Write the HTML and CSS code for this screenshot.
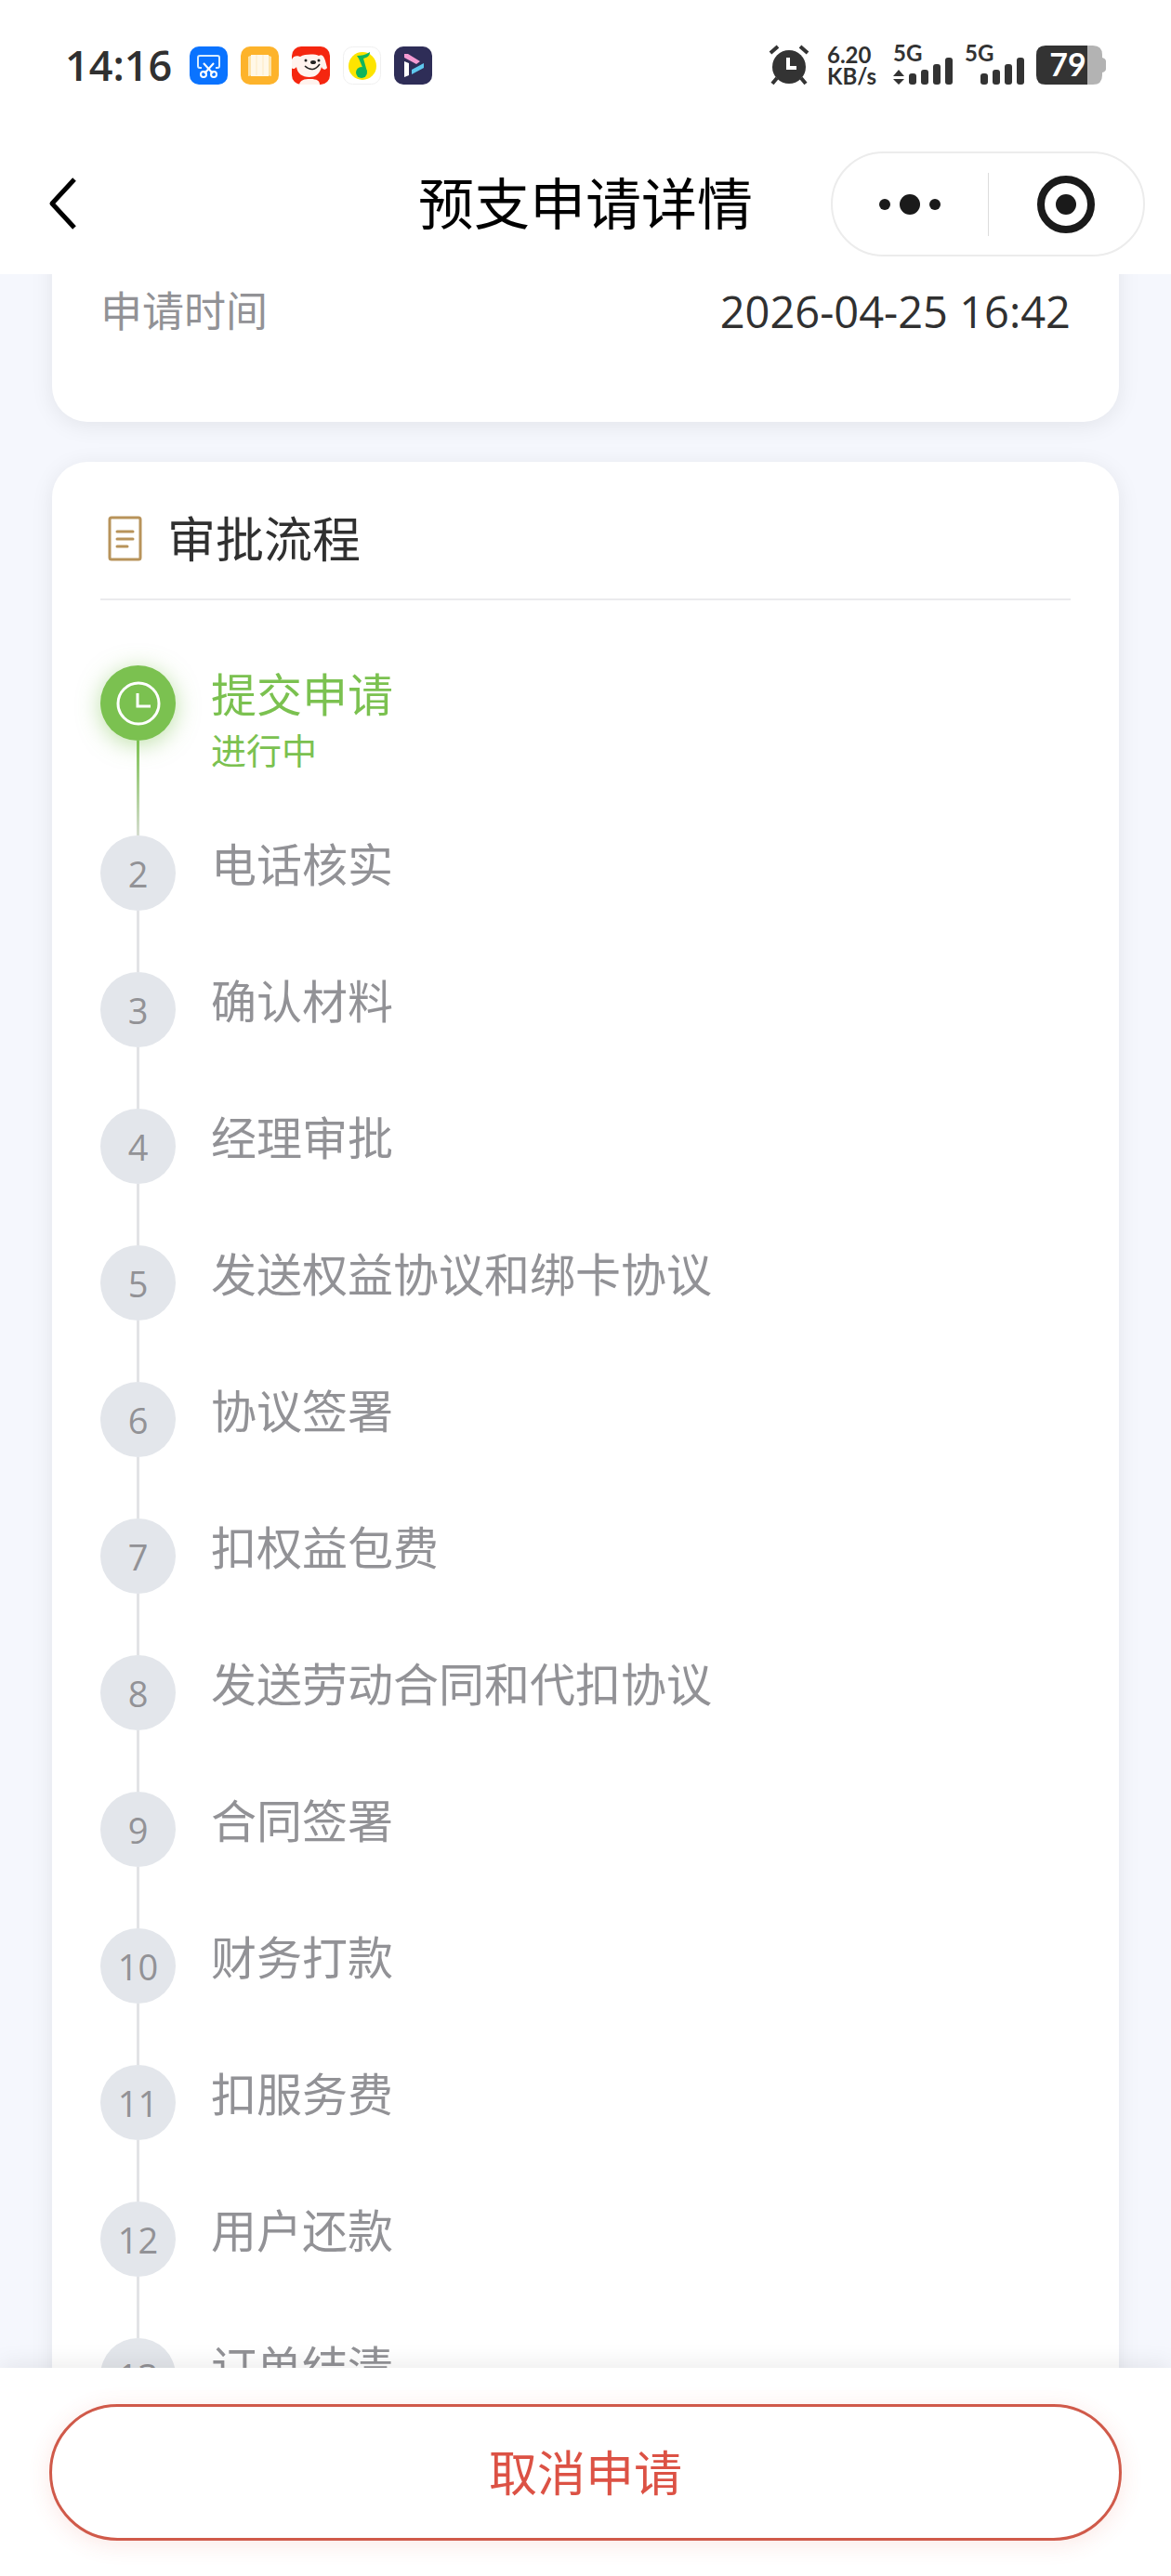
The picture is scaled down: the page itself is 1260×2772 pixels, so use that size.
FILE: index.html
```html
<!DOCTYPE html>
<html lang="zh-CN">
<head>
    <meta charset="UTF-8">
    <meta name="viewport" content="width=device-width, initial-scale=1.0">
    <title>预支申请详情</title>
    <link rel="stylesheet" href="styles.css">
</head>
<body>

    <header class="header">
        <div class="status-bar">
            <div class="status-left">
                <span class="clock">14:16</span>
                <svg class="app-icon" viewBox="0 0 41 41">
                    <rect width="41" height="41" rx="10" fill="#0a73ff"/>
                    <path d="M13 23H11a2 2 0 0 1-2-2V12a2 2 0 0 1 2-2H30a2 2 0 0 1 2 2V21a2 2 0 0 1-2 2H28" fill="none" stroke="#d9ecff" stroke-width="2"/>
                    <path d="M15 18L25 29M26 18L16 29" stroke="#fff" stroke-width="2"/>
                    <circle cx="15" cy="30" r="3" fill="none" stroke="#fff" stroke-width="2"/>
                    <circle cx="26" cy="30" r="3" fill="none" stroke="#fff" stroke-width="2"/>
                </svg>
                <svg class="app-icon" viewBox="0 0 41 41">
                    <rect width="41" height="41" rx="10" fill="#fdb32b"/>
                    <path d="M8 11L13 9V31L8 32ZM33 11L28 9V31L33 32Z" fill="#fde3a8"/>
                    <rect x="11" y="9" width="19" height="23" fill="#fff8e8"/>
                    <path d="M17 9V31M24 9V31" stroke="#fdeac2" stroke-width="1"/>
                </svg>
                <svg class="app-icon" viewBox="0 0 41 41">
                    <rect width="41" height="41" rx="10" fill="#f5260f"/>
                    <path d="M8 41C9 36 13 35 20 35S30 37 30 41Z" fill="#fff3ee"/>
                    <path d="M0 14C2 9 7 10 9 11C14 8 25 8 29 10C34 7 36 14 38 23C36 26 33 25 32 22C30 30 25 33 19 33C11 33 6 29 5 22C3 25 0 24 0 23Z" fill="#fff3ee"/>
                    <ellipse cx="23" cy="17" rx="3" ry="2" fill="#222"/>
                    <circle cx="15" cy="15" r="1.5" fill="#222"/>
                    <circle cx="29" cy="15" r="1.5" fill="#222"/>
                    <path d="M14 21Q23 29 30 19" fill="none" stroke="#222" stroke-width="1.5"/>
                </svg>
                <svg class="app-icon" viewBox="0 0 41 41">
                    <rect x="0.5" y="0.5" width="40" height="40" rx="10" fill="#fff" stroke="#f0f0f0"/>
                    <circle cx="21" cy="21" r="15" fill="#fde400"/>
                    <path d="M15 10C20 10 24 9 29 6C29 10 26 12 22 13L26 27H23L17 13Z" fill="#0fb55c"/>
                    <circle cx="20" cy="28" r="6" fill="#0fb55c"/>
                </svg>
                <svg class="app-icon" viewBox="0 0 41 41">
                    <rect width="41" height="41" rx="10" fill="#2e2d57"/>
                    <path d="M11 16L16 18V31L11 33Z" fill="#fff"/>
                    <path d="M11 8L15 8L28 16L24 19L11 12Z" fill="#f49ad2"/>
                    <path d="M32 18V23L19 30V25Z" fill="#5fc8ee"/>
                </svg>
            </div>
            <div class="status-right">
                <svg class="alarm" viewBox="0 0 42 42">
                    <circle cx="21" cy="23" r="18" fill="#333"/>
                    <path d="M1 8L9 1M41 8L33 1" stroke="#333" stroke-width="4"/>
                    <path d="M8 35L3 41M34 35L39 41" stroke="#333" stroke-width="4"/>
                    <path d="M20 13V24H29" fill="none" stroke="#fff" stroke-width="4"/>
                </svg>
                <div class="speed"><span>6.20</span><span>KB/s</span></div>
                <svg class="signal" viewBox="0 0 65 42">
                    <text x="0" y="17">5G</text>
                    <path d="M0 33L6 26L12 33ZM0 36L6 42L12 36Z"/>
                    <rect x="17" y="30" width="8" height="12" rx="3"/>
                    <rect x="30" y="26" width="8" height="16" rx="3"/>
                    <rect x="43" y="20" width="8" height="22" rx="3"/>
                    <rect x="56" y="13" width="8" height="29" rx="3"/>
                </svg>
                <svg class="signal" viewBox="0 0 65 42">
                    <text x="0" y="17">5G</text>
                    <rect x="17" y="30" width="8" height="12" rx="3"/>
                    <rect x="30" y="26" width="8" height="16" rx="3"/>
                    <rect x="43" y="20" width="8" height="22" rx="3"/>
                    <rect x="56" y="13" width="8" height="29" rx="3"/>
                </svg>
                <svg class="battery" viewBox="0 0 75 42">
                    <path d="M54 0H61Q71 0 71 10V13Q75 14 75 17V25Q75 28 71 29V32Q71 42 61 42H54Z" fill="#b3b3b3"/>
                    <path d="M10 0H55V42H10Q0 42 0 32V10Q0 0 10 0Z" fill="#333"/>
                    <text x="34" y="33" text-anchor="middle">79</text>
                </svg>
            </div>
        </div>

        <nav class="nav-bar">
            <button class="back" type="button" aria-label="返回">
                <svg viewBox="0 0 30 56"><path d="M28 2L4 28L28 54" fill="none" stroke="#000" stroke-width="5" stroke-linejoin="round"/></svg>
            </button>
            <h1>预支申请详情</h1>
            <div class="capsule">
                <button type="button" aria-label="更多">
                    <svg class="dots" viewBox="0 0 66 22">
                        <circle cx="6" cy="11" r="6"/><circle cx="33" cy="11" r="11"/><circle cx="60" cy="11" r="6"/>
                    </svg>
                </button>
                <button type="button" aria-label="关闭">
                    <svg class="target" viewBox="0 0 62 62">
                        <circle cx="31" cy="31" r="27" fill="none" stroke="#1a1a1a" stroke-width="8"/>
                        <circle cx="31" cy="31" r="11"/>
                    </svg>
                </button>
            </div>
        </nav>
    </header>

    <main class="content">
        <section class="card info-card">
            <div class="info-row">
                <span class="label">申请时间</span>
                <span class="value">2026-04-25 16:42</span>
            </div>
        </section>

        <section class="card">
            <h2 class="card-title">
                <svg viewBox="0 0 52 52">
                    <rect x="10" y="3" width="33" height="45" rx="2" fill="none" stroke="#b8935a" stroke-width="3"/>
                    <path d="M18 18H35M18 26H35M18 34H29" stroke="#b8935a" stroke-width="3" stroke-linecap="round"/>
                </svg>
                审批流程
            </h2>
            <ol class="steps">
                <li class="step active">
                    <span class="dot">
                        <svg viewBox="0 0 48 48" fill="none" stroke="#fff" stroke-width="3">
                            <circle cx="24" cy="24" r="22"/>
                            <path d="M23 13V27H37"/>
                        </svg>
                    </span>
                    <div class="step-text"><h3>提交申请</h3><p>进行中</p></div>
                </li>
                <li class="step"><span class="dot">2</span><div class="step-text"><h3>电话核实</h3></div></li>
                <li class="step"><span class="dot">3</span><div class="step-text"><h3>确认材料</h3></div></li>
                <li class="step"><span class="dot">4</span><div class="step-text"><h3>经理审批</h3></div></li>
                <li class="step"><span class="dot">5</span><div class="step-text"><h3>发送权益协议和绑卡协议</h3></div></li>
                <li class="step"><span class="dot">6</span><div class="step-text"><h3>协议签署</h3></div></li>
                <li class="step"><span class="dot">7</span><div class="step-text"><h3>扣权益包费</h3></div></li>
                <li class="step"><span class="dot">8</span><div class="step-text"><h3>发送劳动合同和代扣协议</h3></div></li>
                <li class="step"><span class="dot">9</span><div class="step-text"><h3>合同签署</h3></div></li>
                <li class="step"><span class="dot">10</span><div class="step-text"><h3>财务打款</h3></div></li>
                <li class="step"><span class="dot">11</span><div class="step-text"><h3>扣服务费</h3></div></li>
                <li class="step"><span class="dot">12</span><div class="step-text"><h3>用户还款</h3></div></li>
                <li class="step"><span class="dot">13</span><div class="step-text"><h3>订单结清</h3></div></li>
            </ol>
        </section>
    </main>

    <footer class="footer">
        <button class="cancel" type="button">取消申请</button>
    </footer>

</body>
</html>
```

FILE: styles.css
```css
* {
    box-sizing: border-box;
}

body {
    margin: 0;
    height: 100vh;
    display: flex;
    flex-direction: column;
    overflow: hidden;
    background: #f5f7fd;
    color: #303030;
    font-family: "Open Sans", "Noto Sans CJK SC", sans-serif;
}

h1, h2, h3, p, ol {
    margin: 0;
    padding: 0;
    font-weight: 400;
}

button {
    padding: 0;
    border: none;
    background: none;
    font-family: inherit;
    cursor: pointer;
}

svg {
    display: block;
    overflow: visible;
}

/* header */
.header {
    background: #fff;
    position: relative;
    z-index: 2;
}

.status-bar {
    height: 140px;
    padding: 0 70px;
    display: flex;
    justify-content: space-between;
    align-items: center;
}

.status-left {
    display: flex;
    align-items: center;
    gap: 14px;
}

.clock {
    width: 120px;
    font-size: 45px;
    font-weight: 600;
    line-height: 42px;
}

.app-icon {
    width: 41px;
    height: 41px;
}

.status-right {
    display: flex;
    align-items: center;
    gap: 12px;
    font-family: Lato, sans-serif;
    font-weight: 700;
}

.alarm {
    width: 42px;
    height: 42px;
    margin-right: 8px;
}

.speed {
    width: 59px;
    display: flex;
    flex-direction: column;
    font-size: 24px;
    line-height: 23px;
}

.signal {
    width: 65px;
    height: 42px;
    fill: #333;
    font-size: 24px;
}

.battery {
    width: 75px;
    height: 42px;
    font-size: 34px;
}

.battery text {
    fill: #fff;
}

.nav-bar {
    height: 155px;
    padding: 0 28px;
    display: grid;
    grid-template-columns: 1fr auto 1fr;
    align-items: start;
}

.nav-bar h1 {
    color: #000;
    font-size: 60px;
    line-height: 158px;
}

.back {
    width: 54px;
    height: 158px;
    padding-left: 24px;
}

.back svg {
    width: 30px;
    height: 56px;
}

.capsule {
    justify-self: end;
    width: 338px;
    height: 113px;
    margin-top: 23px;
    display: flex;
    align-items: center;
    border: 2px solid #ececec;
    border-radius: 57px;
}

.capsule button {
    flex: 1;
    height: 68px;
    display: flex;
    justify-content: center;
    align-items: center;
    fill: #1a1a1a;
}

.capsule button + button {
    border-left: 1px solid #dcdcdc;
}

.dots {
    width: 66px;
    height: 22px;
}

.target {
    width: 62px;
    height: 62px;
}

/* content */
.content {
    flex: 1;
    min-height: 0;
    overflow: hidden;
    padding: 0 56px;
}

.card {
    padding: 52px;
    border-radius: 38px;
    background: #fff;
    box-shadow: 0 4px 24px rgba(0, 0, 0, 0.08);
}

.info-card {
    margin-top: -60px;
    margin-bottom: 43px;
    padding-top: 70px;
    padding-bottom: 89px;
}

.info-row {
    display: flex;
    justify-content: space-between;
    line-height: 60px;
}

.label {
    color: #929296;
    font-size: 45px;
}

.value {
    font-size: 47px;
}

.card-title {
    display: flex;
    align-items: center;
    gap: 20px;
    height: 97px;
    padding-bottom: 33px;
    border-bottom: 2px solid #ebebed;
    font-size: 52px;
    line-height: 62px;
}

.card-title svg {
    width: 52px;
    height: 52px;
}

.steps {
    list-style: none;
    padding-top: 70px;
}

.step {
    position: relative;
    display: flex;
    align-items: flex-start;
    gap: 38px;
    padding-bottom: 66px;
    color: #929296;
}

.step::before {
    content: "";
    position: absolute;
    top: 81px;
    bottom: 0;
    left: 39px;
    width: 3px;
    background: #e2e3e6;
}

.step:last-child::before {
    display: none;
}

.dot {
    width: 81px;
    height: 81px;
    display: flex;
    justify-content: center;
    align-items: center;
    border-radius: 50%;
    background: #e3e6eb;
    font-size: 38px;
    line-height: 50px;
}

.step-text h3 {
    font-size: 49px;
    line-height: 62px;
}

.step-text p {
    margin-top: 4px;
    font-size: 38px;
    line-height: 51px;
}

.step.active {
    color: #7bc150;
}

.step.active::before {
    background: linear-gradient(#7bc150, #d5dccf);
}

.step.active .dot {
    background: #7bc150;
    box-shadow: 0 4px 24px rgba(123, 193, 80, 0.5);
}

.dot svg {
    width: 48px;
    height: 48px;
}

/* footer */
.footer {
    position: relative;
    z-index: 2;
    padding: 39px 53px 38px;
    background: #fff;
    box-shadow: 0 -4px 24px rgba(0, 0, 0, 0.08);
}

.cancel {
    display: block;
    width: 100%;
    height: 147px;
    border: 3px solid #d05a4a;
    border-radius: 74px;
    background: #fff;
    box-shadow: 0 4px 24px rgba(224, 82, 66, 0.14);
    color: #dc5245;
    font-size: 52px;
    line-height: 62px;
}
```
